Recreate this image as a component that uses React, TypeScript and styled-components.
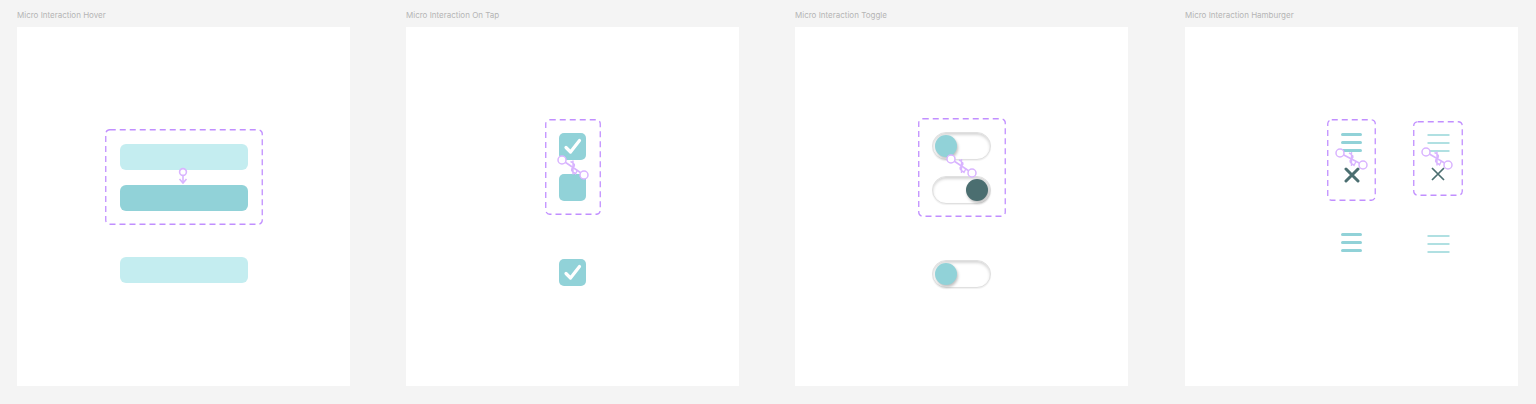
import styled, { createGlobalStyle } from 'styled-components';

const GlobalStyle = createGlobalStyle`
    body {
        margin: 0;
        background: #f4f4f4;
        font-family: Inter, 'Liberation Sans', sans-serif;
    }
`;

const TEAL = '#91d2d8';
const TEAL_LIGHT = '#c4edf0';
const DARK = '#4b6e70';
const LINK = '#d9b4ff';

type Pt = { x1: number; y1: number; x2: number; y2: number };

// prototype link between two states (the little purple noodle)
const Connector = ({ x1, y1, x2, y2 }: Pt) => {
    const mx = (x1 + x2) / 2;
    const my = (y1 + y2) / 2;
    return (
        <Overlay>
            <line x1={x1} y1={y1} x2={x2} y2={y2} stroke={LINK} strokeWidth="1.6" />
            <path
                d={`M${mx - 2.5} ${my - 6} Q${mx + 4} ${my - 3} ${mx} ${my} Q${mx - 4} ${my + 3} ${mx + 2.5} ${my + 6} M${mx - 1} ${my + 3.5} L${mx + 2.5} ${my + 6.5} L${mx + 4.5} ${my + 2.5} M${mx} ${my - 7} L${mx} ${my + 7}`}
                fill="none"
                stroke={LINK}
                strokeWidth="1.4"
            />
            <circle cx={x1} cy={y1} r="4" fill="#fff" stroke={LINK} strokeWidth="1.5" />
            <circle cx={x2} cy={y2} r="4" fill="#fff" stroke={LINK} strokeWidth="1.5" />
        </Overlay>
    );
};

const DownArrow = ({ x, y }: { x: number; y: number }) => (
    <Overlay>
        <line x1={x} y1={y} x2={x} y2={y + 11} stroke={LINK} strokeWidth="1.6" />
        <path d={`M${x - 3.5} ${y + 7} L${x} ${y + 11} L${x + 3.5} ${y + 7}`} fill="none" stroke={LINK} strokeWidth="1.6" />
        <circle cx={x} cy={y} r="3.4" fill="#fff" stroke={LINK} strokeWidth="1.6" />
    </Overlay>
);

const Outline = () => (
    <Overlay>
        <rect x="0.75" y="0.75" width="calc(100% - 1.5px)" height="calc(100% - 1.5px)" rx="4" fill="none" stroke="#c18fff" strokeWidth="1.3" strokeDasharray="6 4" />
    </Overlay>
);

const Check = () => (
    <svg width="27" height="27" viewBox="0 0 27 27">
        <path d="M7 14.5 L11.5 19 L20.5 7.5" fill="none" stroke="#fff" strokeWidth="3.2" strokeLinecap="round" strokeLinejoin="round" />
    </svg>
);

const Burger = ({ thin }: { thin?: boolean }) =>
    thin ? (
        <svg width="23" height="18" viewBox="0 0 23 18">
            {[1, 9, 17].map((y) => (
                <line key={y} x1="0.5" y1={y} x2="22.5" y2={y} stroke="#8fd3d6" strokeWidth="1.4" />
            ))}
        </svg>
    ) : (
        <svg width="21" height="19" viewBox="0 0 21 19">
            {[1.5, 9.5, 17.5].map((y) => (
                <line key={y} x1="1.5" y1={y} x2="19.5" y2={y} stroke={TEAL} strokeWidth="3" strokeLinecap="round" />
            ))}
        </svg>
    );

const Close = ({ thin }: { thin?: boolean }) => (
    <svg width="16" height="16" viewBox="0 0 16 16">
        <path d="M2 2 L14 14 M14 2 L2 14" stroke={DARK} strokeWidth={thin ? 1.7 : 3} strokeLinecap={thin ? 'butt' : 'round'} />
    </svg>
);

const App = () => {
    return (
        <>
            <GlobalStyle />
            <Page>
                <Column>
                    <Label>Micro Interaction Hover</Label>
                    <Frame $top={102}>
                        <DashedBox $w={158} $h={96} $gap={15}>
                            <Outline />
                            <Bar $tone="light" />
                            <Bar $tone="dark" />
                            <DownArrow x={78} y={43} />
                        </DashedBox>
                        <Spacer $h={32} />
                        <Bar $tone="light" />
                    </Frame>
                </Column>

                <Column>
                    <Label>Micro Interaction On Tap</Label>
                    <Frame $top={92}>
                        <DashedBox $w={56} $h={96} $gap={14}>
                            <Outline />
                            <CheckBox>
                                <Check />
                            </CheckBox>
                            <CheckBox />
                            <Connector x1={17} y1={41} x2={39} y2={56} />
                        </DashedBox>
                        <Spacer $h={44} />
                        <CheckBox>
                            <Check />
                        </CheckBox>
                    </Frame>
                </Column>

                <Column>
                    <Label>Micro Interaction Toggle</Label>
                    <Frame $top={91}>
                        <DashedBox $w={88} $h={99} $gap={16}>
                            <Outline />
                            <Toggle>
                                <Knob />
                            </Toggle>
                            <Toggle $on>
                                <Knob $on />
                            </Toggle>
                            <Connector x1={33} y1={41} x2={54} y2={55} />
                        </DashedBox>
                        <Spacer $h={43} />
                        <Toggle>
                            <Knob />
                        </Toggle>
                    </Frame>
                </Column>

                <Column $shift={1}>
                    <Label>Micro Interaction Hamburger</Label>
                    <BurgerFrame>
                        <BurgerCol $top={92}>
                            <IconBox $w={49} $h={82} $pad={14} $gap={15}>
                                <Outline />
                                <Burger />
                                <Close />
                                <Connector x1={13} y1={34} x2={36} y2={46} />
                            </IconBox>
                            <Spacer $h={32} />
                            <Burger />
                        </BurgerCol>
                        <BurgerCol $top={94}>
                            <IconBox $w={50} $h={75} $pad={13} $gap={14}>
                                <Outline />
                                <Burger thin />
                                <Close thin />
                                <Connector x1={13} y1={31} x2={35} y2={44} />
                            </IconBox>
                            <Spacer $h={39} />
                            <Burger thin />
                        </BurgerCol>
                    </BurgerFrame>
                </Column>
            </Page>
        </>
    );
};

export default App;

const Page = styled.div`
    display: flex;
    gap: 56px;
    padding: 10px 18px 0 17px;
`;

const Column = styled.section<{ $shift?: number }>`
    width: 333px;
    margin-left: ${(p) => p.$shift || 0}px;
    display: flex;
    flex-direction: column;
`;

const Label = styled.div`
    height: 11px;
    margin-bottom: 6px;
    font-size: 8px;
    line-height: 11px;
    color: #b4b4b4;
    white-space: nowrap;
`;

const Frame = styled.div<{ $top: number }>`
    height: 359px;
    box-sizing: border-box;
    padding-top: ${(p) => p.$top}px;
    background: #fff;
    display: flex;
    flex-direction: column;
    align-items: center;
`;

const BurgerFrame = styled.div`
    height: 359px;
    box-sizing: border-box;
    padding-left: 142px;
    background: #fff;
    display: flex;
    gap: 37px;
`;

const BurgerCol = styled.div<{ $top: number }>`
    padding-top: ${(p) => p.$top}px;
    display: flex;
    flex-direction: column;
    align-items: center;
`;

const DashedBox = styled.div<{ $w: number; $h: number; $gap: number }>`
    position: relative;
    width: ${(p) => p.$w}px;
    height: ${(p) => p.$h}px;
    display: flex;
    flex-direction: column;
    align-items: center;
    justify-content: center;
    gap: ${(p) => p.$gap}px;
`;

const IconBox = styled.div<{ $w: number; $h: number; $pad: number; $gap: number }>`
    position: relative;
    box-sizing: border-box;
    width: ${(p) => p.$w}px;
    height: ${(p) => p.$h}px;
    padding-top: ${(p) => p.$pad}px;
    display: flex;
    flex-direction: column;
    align-items: center;
    gap: ${(p) => p.$gap}px;
`;

const Overlay = styled.svg`
    position: absolute;
    inset: 0;
    width: 100%;
    height: 100%;
    overflow: visible;
    pointer-events: none;
`;

const Spacer = styled.div<{ $h: number }>`
    height: ${(p) => p.$h}px;
    flex-shrink: 0;
`;

const Bar = styled.div<{ $tone: 'light' | 'dark' }>`
    width: 128px;
    height: 26px;
    border-radius: 6px;
    background: ${(p) => (p.$tone === 'light' ? TEAL_LIGHT : TEAL)};
`;

const CheckBox = styled.div`
    width: 27px;
    height: 27px;
    border-radius: 5px;
    background: ${TEAL};
    display: flex;
`;

const Toggle = styled.div<{ $on?: boolean }>`
    box-sizing: border-box;
    width: 59px;
    height: 28px;
    padding: 0 2px;
    border-radius: 14px;
    background: #fff;
    border: 1px solid #e0e0e0;
    box-shadow: inset 0 2px 3px rgba(0, 0, 0, 0.16), 0 1px 1px rgba(0, 0, 0, 0.06);
    display: flex;
    align-items: center;
    justify-content: ${(p) => (p.$on ? 'flex-end' : 'flex-start')};
`;

const Knob = styled.div<{ $on?: boolean }>`
    width: 22px;
    height: 22px;
    border-radius: 50%;
    background: ${(p) => (p.$on ? DARK : TEAL)};
    box-shadow: 1px 2px 3px rgba(0, 0, 0, 0.25);
`;
